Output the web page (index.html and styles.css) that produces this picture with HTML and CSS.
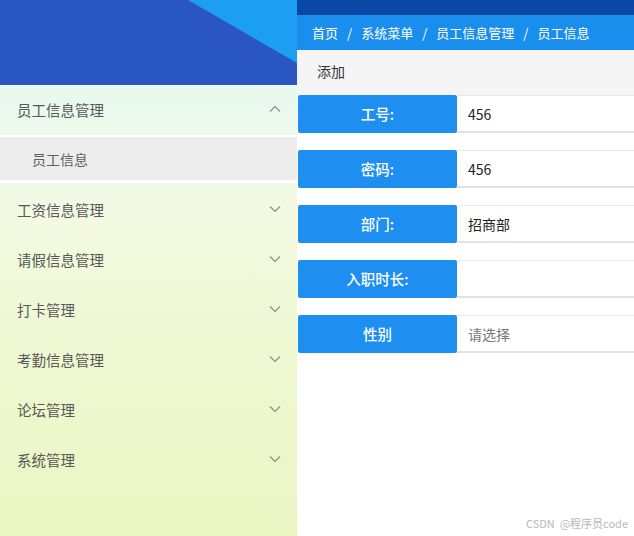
FILE: index.html
```html
<!DOCTYPE html>
<html lang="zh-CN">
<head>
  <meta charset="UTF-8">
  <meta name="viewport" content="width=device-width, initial-scale=1.0">
  <title>员工信息</title>
  <link rel="stylesheet" href="styles.css">
</head>
<body>
  <div class="layout">
    <aside class="sidebar">
      <div class="logo-bar">
        <svg class="logo-shape" width="297" height="85" viewBox="0 0 297 85">
          <polygon points="188,0 297,0 297,63" fill="#1c9ff3"/>
        </svg>
      </div>
      <ul class="menu">
        <li class="menu-item open">
          <span>员工信息管理</span>
          <svg class="arrow" width="12" height="8" viewBox="0 0 12 8"><polyline points="1,6.5 6,1.5 11,6.5"/></svg>
        </li>
        <li class="sub-item">员工信息</li>
        <li class="menu-item">
          <span>工资信息管理</span>
          <svg class="arrow" width="12" height="8" viewBox="0 0 12 8"><polyline points="1,1.5 6,6.5 11,1.5"/></svg>
        </li>
        <li class="menu-item">
          <span>请假信息管理</span>
          <svg class="arrow" width="12" height="8" viewBox="0 0 12 8"><polyline points="1,1.5 6,6.5 11,1.5"/></svg>
        </li>
        <li class="menu-item">
          <span>打卡管理</span>
          <svg class="arrow" width="12" height="8" viewBox="0 0 12 8"><polyline points="1,1.5 6,6.5 11,1.5"/></svg>
        </li>
        <li class="menu-item">
          <span>考勤信息管理</span>
          <svg class="arrow" width="12" height="8" viewBox="0 0 12 8"><polyline points="1,1.5 6,6.5 11,1.5"/></svg>
        </li>
        <li class="menu-item">
          <span>论坛管理</span>
          <svg class="arrow" width="12" height="8" viewBox="0 0 12 8"><polyline points="1,1.5 6,6.5 11,1.5"/></svg>
        </li>
        <li class="menu-item">
          <span>系统管理</span>
          <svg class="arrow" width="12" height="8" viewBox="0 0 12 8"><polyline points="1,1.5 6,6.5 11,1.5"/></svg>
        </li>
      </ul>
    </aside>

    <main class="main">
      <div class="top-strip"></div>
      <div class="breadcrumb">
        <span>首页</span><span class="sep">/</span>
        <span>系统菜单</span><span class="sep">/</span>
        <span>员工信息管理</span><span class="sep">/</span>
        <span>员工信息</span>
      </div>
      <div class="toolbar">添加</div>
      <form class="form">
        <div class="row">
          <label class="row-label">工号:</label>
          <div class="row-value">456</div>
        </div>
        <div class="row">
          <label class="row-label">密码:</label>
          <div class="row-value">456</div>
        </div>
        <div class="row">
          <label class="row-label">部门:</label>
          <div class="row-value">招商部</div>
        </div>
        <div class="row">
          <label class="row-label">入职时长:</label>
          <div class="row-value"></div>
        </div>
        <div class="row">
          <label class="row-label">性别</label>
          <div class="row-value placeholder">请选择</div>
        </div>
      </form>
    </main>
  </div>
  <div class="watermark">CSDN&nbsp; @程序员code</div>
</body>
</html>
```

FILE: styles.css
```css
body {
  margin: 0;
  font-family: "Noto Sans CJK SC", "Noto Sans", Arial, sans-serif;
  background: #ffffff;
}

.layout {
  display: flex;
  height: 536px;
  overflow: hidden;
}

/* sidebar */
.sidebar {
  width: 297px;
  flex-shrink: 0;
  display: flex;
  flex-direction: column;
  background: linear-gradient(to bottom, #dcf7f7 0%, #eaf9ee 20%, #f3fae2 40%, #eef8d2 65%, #e9f6c2 100%);
}

.logo-bar {
  height: 85px;
  background: #2a56c2;
}

.logo-shape {
  display: block;
}

.menu {
  list-style: none;
  margin: -1px 0 0;
  padding: 0;
}

.menu-item {
  height: 50px;
  display: flex;
  align-items: center;
  justify-content: space-between;
  padding: 0 16px 0 17px;
  font-size: 14.5px;
  color: #585858;
}

.arrow {
  fill: none;
  stroke: #8a8a8a;
  stroke-width: 1.1;
}

.sub-item {
  height: 43px;
  margin: 3px 0 4px;
  box-shadow: 0 -2px 0 #ffffff, 0 3px 0 #ffffff;
  background: #ececec;
  display: flex;
  align-items: center;
  padding-left: 32px;
  font-size: 14px;
  color: #5f5f5f;
}

/* main area */
.main {
  flex: 1;
  display: flex;
  flex-direction: column;
}

.top-strip {
  height: 15px;
  background: #0b47a6;
}

.breadcrumb {
  height: 35px;
  background: #1a8eec;
  color: #ffffff;
  font-size: 13px;
  display: flex;
  align-items: center;
  padding-left: 15px;
}

.breadcrumb .sep {
  margin: 0 9px;
}

.toolbar {
  height: 45px;
  background: #f5f5f5;
  display: flex;
  align-items: center;
  padding: 0 0 3px 20px;
  box-sizing: border-box;
  font-size: 14px;
  color: #333333;
}

.form {
  display: flex;
  flex-direction: column;
  gap: 17px;
  padding-left: 1px;
}

.row {
  display: flex;
  height: 38px;
}

.row-label {
  width: 159px;
  background: #1e8ff0;
  border-radius: 2px;
  color: #ffffff;
  font-size: 14.5px;
  font-weight: 500;
  display: flex;
  align-items: center;
  justify-content: center;
  padding-bottom: 2px;
  box-sizing: border-box;
}

.row-value {
  flex: 1;
  box-sizing: border-box;
  border-top: 1px solid #e8e8e8;
  border-bottom: 2px solid #e2e2e2;
  display: flex;
  align-items: center;
  padding-left: 11px;
  font-size: 14px;
  color: #222222;
}

.row-value.placeholder {
  color: #777777;
}

.watermark {
  position: absolute;
  right: 6px;
  bottom: 5px;
  font-size: 11px;
  color: #b8b8b8;
}
```
